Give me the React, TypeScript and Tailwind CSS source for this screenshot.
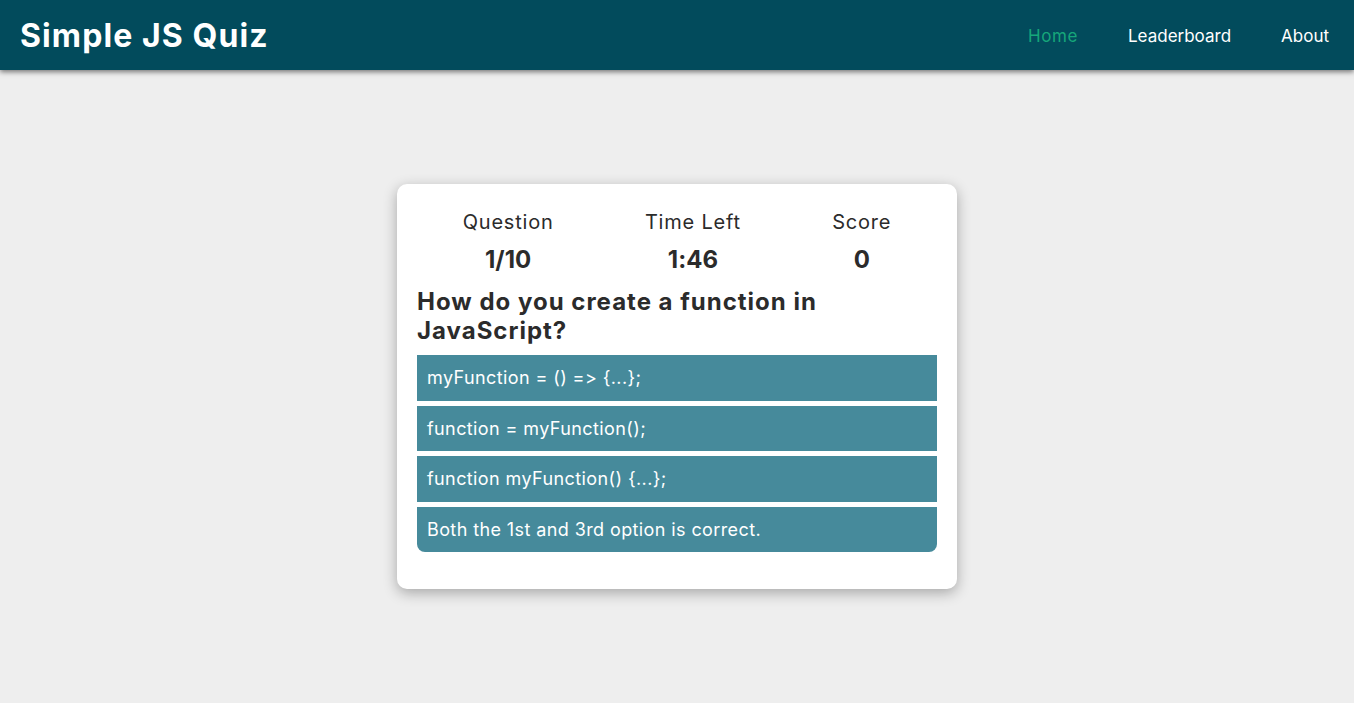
import React from 'react';

const OPTIONS = [
  'myFunction = () => {...};',
  'function = myFunction();',
  'function myFunction() {...};',
  'Both the 1st and 3rd option is correct.',
];

const STATS = [
  { label: 'Question', value: '1/10' },
  { label: 'Time Left', value: '1:46' },
  { label: 'Score', value: '0' },
];

export default function App() {
  return (
    <div className="min-h-screen flex flex-col bg-[#eeeeee] text-[#2b2b2b] font-['Inter',sans-serif] [font-feature-settings:'calt'_0,'liga'_0]">
      <nav className="h-[70px] shrink-0 flex items-center justify-between pl-5 pr-[25px] bg-[#024b5c] shadow-[0_2px_5px_rgba(0,0,0,0.5)] relative z-10">
        <h1 className="text-[32px] font-bold text-white tracking-[1.1px] pt-[1px]">Simple JS Quiz</h1>
        <ul className="flex items-center gap-[50px] text-[17px] text-white pt-[3px]">
          <li className="text-[#16a67a] tracking-[0.6px]">Home</li>
          <li>Leaderboard</li>
          <li>About</li>
        </ul>
      </nav>

      <main className="flex-1 flex items-center justify-center">
        <div className="w-[560px] bg-white rounded-[10px] shadow-[0_4px_14px_rgba(0,0,0,0.3)] px-5 pt-[25px] pb-[37px]">
          <div className="flex justify-around">
            {STATS.map(stat => (
              <div key={stat.label} className="flex flex-col items-center">
                <div className="text-[20px] leading-[26px] tracking-[0.8px]">{stat.label}</div>
                <div className="text-[24px] font-bold leading-[30px] mt-[10px]">{stat.value}</div>
              </div>
            ))}
          </div>

          <h2 className="text-[24px] font-bold leading-[29px] tracking-[1px] mt-[12px] mb-[10px]">
            How do you create a function in JavaScript?
          </h2>

          <div className="flex flex-col gap-[5px]">
            {OPTIONS.map((option, i) => (
              <button
                key={option}
                className={`h-[45.5px] text-left pl-[10px] text-[18px] tracking-[0.4px] text-white bg-[#468a9b] ${
                  i === OPTIONS.length - 1 ? 'rounded-b-[8px]' : ''
                }`}
              >
                {option}
              </button>
            ))}
          </div>
        </div>
      </main>
    </div>
  );
}
